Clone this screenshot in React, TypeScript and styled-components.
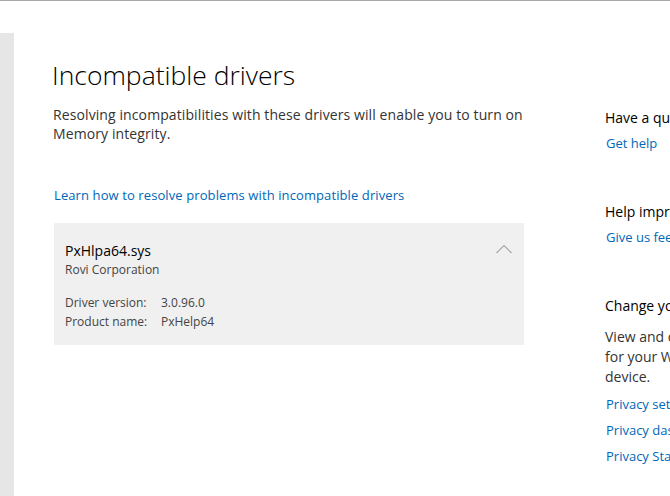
import React from "react";
import styled, { createGlobalStyle } from "styled-components";

const Global = createGlobalStyle`
  html, body {
    margin: 0;
    padding: 0;
    background: #ffffff;
    overflow: hidden;
  }
  body {
    font-family: "Open Sans", "Noto Sans", sans-serif;
    color: #000;
  }
`;

const Window = styled.div`
  width: 670px;
  height: 496px;
  border-top: 1px solid #a8a8a8;
  box-sizing: border-box;
  display: flex;
  overflow: hidden;
`;

const NavStrip = styled.div`
  width: 14px;
  flex: none;
  margin-top: 32px;
  background: #e6e6e6;
`;

const Main = styled.div`
  width: 472px;
  flex: none;
  padding: 58px 0 0 38px;
`;

const Title = styled.h1`
  margin: 0;
  font-size: 26.5px;
  font-weight: 300;
  line-height: 32px;
  color: #000;
`;

const Lead = styled.p`
  margin: 14px 0 0 1px;
  font-size: 14px;
  line-height: 19px;
  letter-spacing: 0.1px;
  color: #333;
`;

const Link = styled.a`
  display: block;
  color: #0067b8;
  font-size: 13px;
  line-height: 18px;
  text-decoration: none;
  cursor: pointer;
`;

const LearnLink = styled(Link)`
  margin: 43px 0 0 2px;
  letter-spacing: 0.1px;
`;

const Card = styled.div`
  margin: 19px 0 0 2px;
  width: 470px;
  height: 122px;
  box-sizing: border-box;
  background: #f0f0f0;
  padding: 18px 11px 0 11px;
  position: relative;
`;

const FileName = styled.div`
  font-size: 14px;
  line-height: 20px;
  color: #000;
`;

const Vendor = styled.div`
  font-size: 12px;
  line-height: 18px;
  color: #444;
`;

const Details = styled.div`
  margin-top: 14px;
  display: grid;
  grid-template-columns: 96px auto;
  font-size: 12px;
  line-height: 19px;
  color: #444;
`;

const Chevron = styled.svg`
  position: absolute;
  top: 21px;
  right: 12px;
`;

const Side = styled.div`
  flex: none;
  margin-left: 81px;
  padding-top: 107px;
  width: 260px;
`;

const SideGroup = styled.div`
  margin-bottom: 50px;
`;

const SideHeading = styled.div`
  font-size: 14px;
  line-height: 20px;
  color: #000;
  white-space: nowrap;
`;

const SideText = styled.p`
  margin: 11px 0 0;
  font-size: 14px;
  line-height: 20px;
  color: #333;
  white-space: nowrap;
`;

const SideLink = styled(Link)`
  margin: 6px 0 0 1px;
  white-space: nowrap;
`;

const StackLink = styled(SideLink)`
  margin-top: 8px;
`;

export default function App() {
  return (
    <>
      <Global />
      <Window>
        <NavStrip />
        <Main>
          <Title>Incompatible drivers</Title>
          <Lead>
            Resolving incompatibilities with these drivers will enable you to
            turn on Memory integrity.
          </Lead>
          <LearnLink>Learn how to resolve problems with incompatible drivers</LearnLink>
          <Card>
            <FileName>PxHlpa64.sys</FileName>
            <Vendor>Rovi Corporation</Vendor>
            <Details>
              <span>Driver version:</span>
              <span>3.0.96.0</span>
              <span>Product name:</span>
              <span>PxHelp64</span>
            </Details>
            <Chevron width="16" height="10" viewBox="0 0 16 10">
              <path d="M0.5 9 L8 1.5 L15.5 9" fill="none" stroke="#7a7a7a" strokeWidth="1" />
            </Chevron>
          </Card>
        </Main>
        <Side>
          <SideGroup>
            <SideHeading>Have a question?</SideHeading>
            <SideLink>Get help</SideLink>
          </SideGroup>
          <SideGroup>
            <SideHeading>Help improve Windows Security</SideHeading>
            <SideLink>Give us feedback</SideLink>
          </SideGroup>
          <SideGroup>
            <SideHeading>Change your privacy settings</SideHeading>
            <SideText>
              View and change privacy settings
              <br />
              for your Windows 10 Pro
              <br />
              device.
            </SideText>
            <StackLink>Privacy settings</StackLink>
            <StackLink>Privacy dashboard</StackLink>
            <StackLink>Privacy Statement</StackLink>
          </SideGroup>
        </Side>
      </Window>
    </>
  );
}
